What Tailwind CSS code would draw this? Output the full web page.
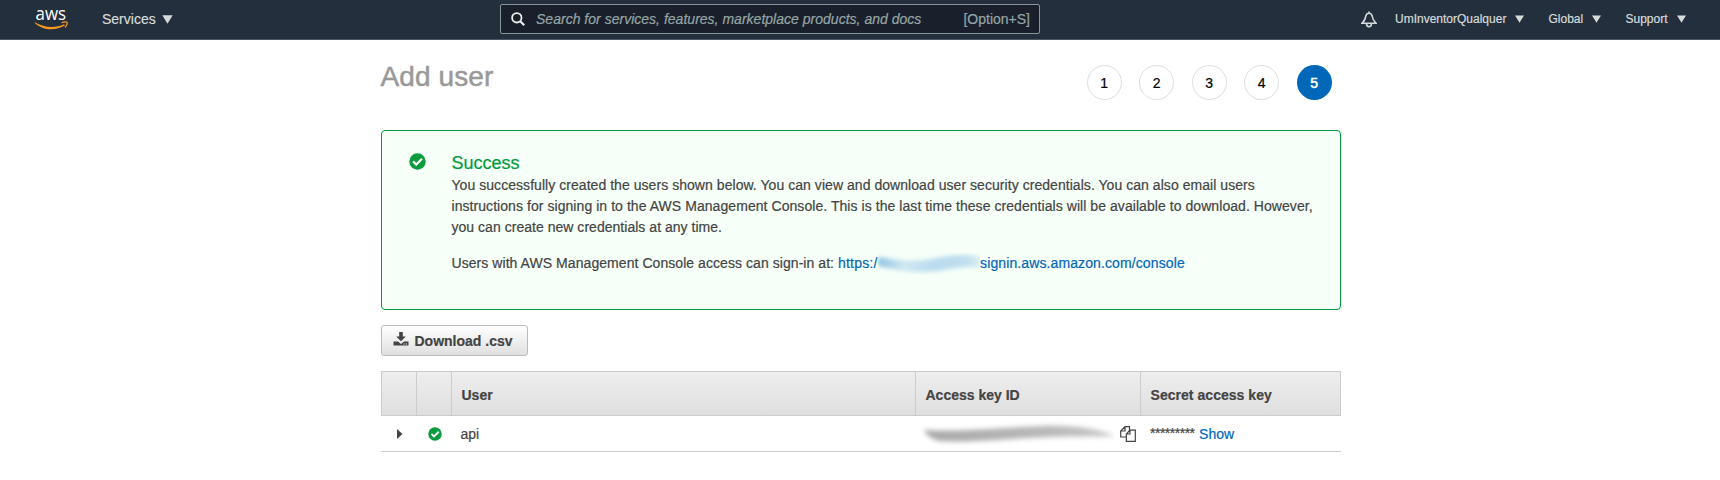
<!DOCTYPE html>
<html lang="en">
<head>
<meta charset="utf-8">
<title>Add user</title>
<script src="https://cdn.jsdelivr.net/npm/@tailwindcss/browser@4"></script>
</head>
<body class="h-[480px] w-[1720px] overflow-hidden bg-white font-['Liberation_Sans',Arial,sans-serif] text-sm text-[#444] [-webkit-text-stroke:0.2px]">
<header class="flex h-10 items-center border-b border-[#4c5766] bg-[#232f3d] text-[#d5dbdb]">
  <svg class="ml-[34px] h-[38px] w-[36px] shrink-0 overflow-visible" viewBox="0 -3 36 38">
    <text x="1.500" y="15.600" font-family="Open Sans, sans-serif" font-size="18" font-weight="500" fill="#fff" textLength="30.500" lengthAdjust="spacingAndGlyphs">aws</text>
    <path d="M.8 18.300C10 23.600 20.500 24.600 30.300 20.300L30.900 21.500C21.500 27 8.500 26.500 .8 18.900z" fill="#f7981f"/>
    <path d="M27.600 18.700C30 17.700 33 17.700 33.200 18.500C33.400 20 32.400 22 31 23.500" fill="none" stroke="#f7981f" stroke-width="1.300"/>
  </svg>
  <nav class="ml-8 flex w-[71px] items-center justify-between pb-0.5"><span>Services</span>
    <svg class="mt-px h-[9px] w-[11px]" viewBox="0 0 11 9"><path d="M.3.3h10.400L5.500 8.700z" fill="currentColor"/></svg></nav>
  <div class="mb-px ml-[327px] flex h-[30px] w-[540px] items-center rounded-xs border border-[#879596] bg-[#1a202b] pr-[9px] pl-[10px] text-[#95a5a6]">
    <svg class="h-[14px] w-[14px]" viewBox="0 0 14 14" fill="none" stroke="#eaeded" stroke-width="1.800"><circle cx="5.800" cy="5.800" r="4.700"/><path d="M9.200 9.200L13.200 13.200" stroke-width="2.200"/></svg>
    <span class="ml-[11px] pb-px whitespace-nowrap italic tracking-[.015px]">Search for services, features, marketplace products, and docs</span>
    <span class="ml-auto pb-px whitespace-nowrap">[Option+S]</span>
  </div>
  <div class="ml-[321px] flex items-center pb-0.5 text-xs">
    <svg class="mt-0.5 h-[17px] w-[16px]" viewBox="0 0 16 17" fill="none" stroke="currentColor" stroke-width="1.600"><path d="M8 2.200C5.300 2.200 4.700 4.500 4.300 7C4 9 2.500 10.500 1 12.200H15C13.500 10.500 12 9 11.700 7C11.300 4.500 10.700 2.200 8 2.200zM8 .500V2M5.500 12.500C5.500 16.800 10.500 16.800 10.500 12.500"/></svg>
    <span class="ml-[18px] flex w-[128.500px] items-center justify-between"><span>UmInventorQualquer</span><svg class="h-[8px] w-[9px]" viewBox="0 0 9 8"><path d="M0 .5h9L4.500 7.800z" fill="currentColor"/></svg></span>
    <span class="ml-[25px] flex w-[52px] items-center justify-between"><span>Global</span><svg class="h-[8px] w-[9px]" viewBox="0 0 9 8"><path d="M0 .5h9L4.500 7.800z" fill="currentColor"/></svg></span>
    <span class="ml-[25px] flex w-[60px] items-center justify-between"><span>Support</span><svg class="h-[8px] w-[9px]" viewBox="0 0 9 8"><path d="M0 .5h9L4.500 7.800z" fill="currentColor"/></svg></span>
  </div>
</header>
<main class="ml-[381px] w-[960px]">
  <div class="flex h-[90px] justify-between pt-[25px] pr-[9.400px]">
    <h1 class="-mt-[5px] -ml-[.5px] text-[28px] leading-[34px] tracking-[.1px] text-[#999] [-webkit-text-stroke:0.5px]">Add user</h1>
    <ol class="flex gap-[17.500px] text-black">
      <li class="flex size-[35px] items-center justify-center rounded-full border border-[#ddd]">1</li>
      <li class="flex size-[35px] items-center justify-center rounded-full border border-[#ddd]">2</li>
      <li class="flex size-[35px] items-center justify-center rounded-full border border-[#ddd]">3</li>
      <li class="flex size-[35px] items-center justify-center rounded-full border border-[#ddd]">4</li>
      <li class="flex size-[35px] items-center justify-center rounded-full bg-[#0067b9] text-white [-webkit-text-stroke:0.5px]">5</li>
    </ol>
  </div>
  <section class="flex h-[180px] rounded border border-[#009a3d] bg-[#f6fff8] pt-[20px] pl-[27px]">
    <svg class="mt-[2px] h-[17px] w-[17px] shrink-0" viewBox="0 0 17 17"><circle cx="8.500" cy="8.500" r="8.200" fill="#0a9b3e"/><path d="M4 8.300L7.300 11.500L13 5.800" fill="none" stroke="#fff" stroke-width="2.300"/></svg>
    <div class="ml-[25.500px] whitespace-nowrap leading-[21px]">
      <h2 class="text-lg leading-[24px] text-[#009a3d]">Success</h2>
      <p class="tracking-[.049px]">You successfully created the users shown below. You can view and download user security credentials. You can also email users</p>
      <p class="tracking-[.06px]">instructions for signing in to the AWS Management Console. This is the last time these credentials will be available to download. However,</p>
      <p class="tracking-[.03px]">you can create new credentials at any time.</p>
      <p class="mt-[15px] flex"><span class="tracking-[.06px]">Users with AWS Management Console access can sign-in at:&nbsp;</span><span class="tracking-[.2px] text-[#0067b9]">https:/</span>
        <svg class="h-[22px] w-[102.500px]" viewBox="0 0 102 22"><defs><linearGradient id="g1"><stop offset="0" stop-color="#8fc3e2"/><stop offset=".25" stop-color="#cfe8f2"/><stop offset=".55" stop-color="#b9dbef"/><stop offset=".85" stop-color="#c0deee"/><stop offset="1" stop-color="#ddf0f4"/></linearGradient><filter id="b1" x="-10%" y="-30%" width="120%" height="160%"><feGaussianBlur stdDeviation="2"/></filter></defs><path d="M0 4C18 7 35 9 53 6C70 2 85 1 103 3V15C83 12 76 16 59 18C35 21 20 17 0 13z" fill="url(#g1)" filter="url(#b1)"/></svg>
        <span class="tracking-[.11px] text-[#0067b9]">signin.aws.amazon.com/console</span></p>
    </div>
  </section>
  <button class="mt-[15px] flex h-[31px] w-[147px] items-center rounded-[3px] border border-[#bbb] bg-linear-to-b from-white to-[#e0e0e0] pl-[11px] font-bold">
    <svg class="mb-0.5 h-[15px] w-[16px]" viewBox="0 0 16 15" fill="#444"><path d="M6.200 0h3.600v4.500h3L8 9.300L3.200 4.500h3zM.500 9.500H5L8 12L11 9.500h4.500V13.500H.500z"/><path d="M10.500 11.500h1.200v1h-1.200zM12.800 11.500H14v1h-1.200z" fill="#eee"/></svg>
    <span class="ml-[5.500px]">Download .csv</span>
  </button>
  <div class="mt-[15px]">
    <div class="grid h-[45px] grid-cols-[35px_35px_464px_225px_201px] items-stretch border-y border-[#ccc] bg-linear-to-b from-[#eee] to-[#dfdfdf] font-bold">
      <div class="border-l border-[#ccc]"></div>
      <div class="border-l border-[#ccc]"></div>
      <div class="flex items-center border-l border-[#ccc] pt-0.5 pl-[9.500px]">User</div>
      <div class="flex items-center border-l border-[#ccc] pt-0.5 pl-[9.500px]">Access key ID</div>
      <div class="flex items-center border-x border-[#ccc] pt-0.5 pl-[9.500px] tracking-[.04px]">Secret access key</div>
    </div>
    <div class="grid h-[36px] grid-cols-[35px_35px_464px_225px_201px] items-center border-b border-[#ccc]">
      <svg class="ml-[16px] h-[10px] w-[6px]" viewBox="0 0 6 10"><path d="M0 0L5.500 5L0 10z" fill="#444"/></svg>
      <svg class="ml-[12px] h-[14px] w-[14px]" viewBox="0 0 17 17"><circle cx="8.500" cy="8.500" r="8.200" fill="#0a9b3e"/><path d="M4 8.300L7.300 11.500L13 5.800" fill="none" stroke="#fff" stroke-width="2.300"/></svg>
      <span class="pl-[9.500px]">api</span>
      <div class="flex items-center pl-[6px]">
        <svg class="h-[28px] w-[193px]" viewBox="0 0 193 28"><defs><linearGradient id="g2"><stop offset="0" stop-color="#a8a8a8"/><stop offset=".7" stop-color="#bababa"/><stop offset="1" stop-color="#c8c8c8"/></linearGradient><filter id="b2" x="-10%" y="-40%" width="120%" height="180%"><feGaussianBlur stdDeviation="2.500"/></filter></defs><path d="M3 10C40 12 75 8 120 6C155 5 178 9 194 16C175 17 155 16 130 17C95 18 50 23 18 21Q5 17 3 10z" fill="url(#g2)" filter="url(#b2)"/></svg>
        <svg class="ml-[6px] h-[16px] w-[16px]" viewBox="0 0 16 16" fill="#fff" stroke="#444" stroke-width="1.200"><path d="M5 .7H9.500V11H.7V5zM5 .7V5H.7"/><path d="M10 4.200H15.300V15.300H6.300V8zM10 4.200V8H6.300"/></svg>
      </div>
      <div class="flex pl-[10px]"><span class="-mt-px tracking-[-.5px]">*********</span><span class="ml-[4.500px] text-[#0067b9]">Show</span></div>
    </div>
  </div>
</main>
</body>
</html>
